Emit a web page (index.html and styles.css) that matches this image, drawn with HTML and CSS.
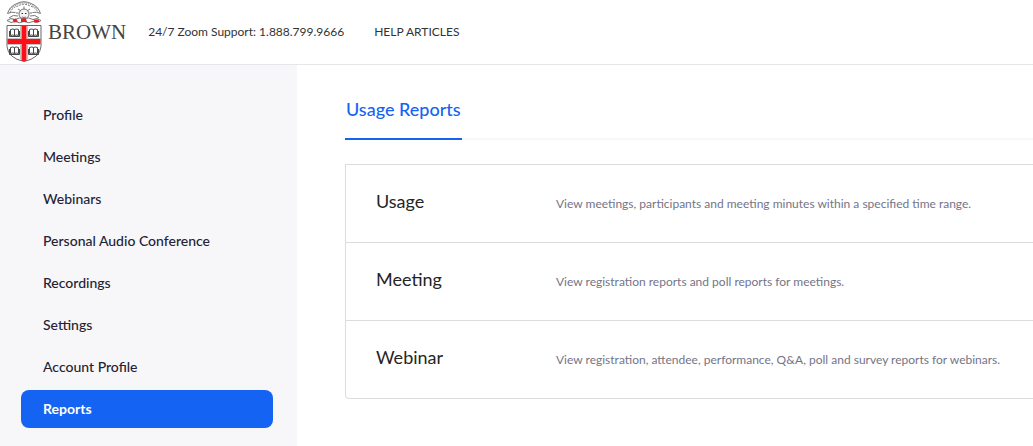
FILE: index.html
```html
<!DOCTYPE html>
<html lang="en">
<head>
<meta charset="utf-8">
<meta name="viewport" content="width=device-width, initial-scale=1">
<title>Usage Reports</title>
<link rel="stylesheet" href="styles.css">
</head>
<body>
<header class="topbar">
  <a class="brand" href="#" aria-label="Brown home">
    <svg class="crest" viewBox="0 0 36 62" aria-hidden="true">
      <g fill="none" stroke="#777" stroke-width="1">
        <path d="M1.500 12.500Q4 5 11 2.500Q18-1 25 2.500Q32 5 34.500 12.500"/>
        <path stroke-dasharray="2 1" d="M4 11.500Q6 6.500 12 5Q18 1.500 24 5Q30 6.500 32 11.500"/>
        <path stroke="#999" stroke-dasharray="1 1" stroke-width="2" d="M4 8Q10 2 18 1.500Q26 2 32 8"/>
        <path d="M1.500 12.500q4-2 8-1M34.500 12.500q-4-2-8-1M3 17Q7 13 12 15M33 17Q29 13 24 15"/>
        <circle cx="18" cy="13" r="5" fill="#f4f4f4"/>
        <path d="M12 8l3 2M24 8l-3 2M18 5.500v2.500M10 12h2.500M23.500 12h2.500M16 16q2 1 4 0"/>
      </g>
      <path d="M15.500 12.500h1.500M19 12.500h1.500" stroke="#333"/>
      <path d="M1 19.500Q5 16 9 18.500Q13 16 18 17.500Q23 16 27 18.500Q31 16 35 19.500Q31 23 27 20.500Q23 23 18 20.500Q13 23 9 20.500Q5 23 1 19.500Z" fill="#fff" stroke="#777"/>
      <path d="M6.500 18.500l3.500-1 2 3-4 1zM15 17.500h5l1 3.500h-6zM27.500 18.500l5 0 1 2.500-5 .5z" fill="#ee1c24"/>
      <path d="M1 24.500h34v21Q34 57 18 60.500Q2 57 1 45.500Z" fill="#fff" stroke="#666" stroke-width="1"/>
      <path d="M15.500 25h5V59.500q-2.500 1-5 0zM1.500 38h33v5h-33z" fill="#fb1017"/>
      <path d="M14.500 25V37.500H1.500M21.500 25V37.500h13M1.500 43.500H14.500v15M34.500 43.500H21.500v15" fill="none" stroke="#aaa" stroke-width=".7"/>
      <g fill="none" stroke="#444">
        <path id="book" d="M4.500 28.500q2.500-1 4 0q1.500-1 4 0v6q-2.500-1-4 0q-1.500-1-4 0zM8.500 28.500v6M3.500 30v5.500h10v-5.500"/>
        <use href="#book" x="19"/>
        <use href="#book" y="18"/>
        <use href="#book" x="19" y="18"/>
      </g>
    </svg>
    <span class="wordmark">BROWN</span>
  </a>
  <span class="support">24/7 Zoom Support: 1.888.799.9666</span>
  <a class="help" href="#">HELP ARTICLES</a>
</header>
<div class="layout">
  <nav class="sidebar" aria-label="Account">
    <a class="item" href="#">Profile</a>
    <a class="item" href="#">Meetings</a>
    <a class="item" href="#">Webinars</a>
    <a class="item" href="#">Personal Audio Conference</a>
    <a class="item" href="#">Recordings</a>
    <a class="item" href="#">Settings</a>
    <a class="item" href="#">Account Profile</a>
    <a class="item active" href="#" aria-current="page">Reports</a>
  </nav>
  <main class="content">
    <div class="tabs"><a class="tab" href="#">Usage Reports</a></div>
    <div class="reports">
      <div class="report">
        <a class="name" href="#">Usage</a>
        <p class="description">View meetings, participants and meeting minutes within a specified time range.</p>
      </div>
      <div class="report">
        <a class="name" href="#">Meeting</a>
        <p class="description">View registration reports and poll reports for meetings.</p>
      </div>
      <div class="report">
        <a class="name" href="#">Webinar</a>
        <p class="description">View registration, attendee, performance, Q&amp;A, poll and survey reports for webinars.</p>
      </div>
    </div>
  </main>
</div>
</body>
</html>
```
FILE: styles.css
```css
* { box-sizing: border-box; }
body {
  margin: 0;
  min-height: 100vh;
  display: flex;
  flex-direction: column;
  background: #fff;
  font-family: Lato, "Liberation Sans", sans-serif;
  color: #232333;
}
a { color: inherit; text-decoration: none; }
.topbar {
  display: flex;
  align-items: center;
  padding: 0 6px;
  border-bottom: 1px solid #e6e6ea;
  font-size: 12px;
  line-height: 16px;
  color: #333;
}
.brand { display: flex; align-items: center; gap: 6px; padding: 1px 0; }
.crest { width: 36px; height: 62px; }
.wordmark {
  font-family: "Liberation Serif", serif;
  font-size: 21px;
  line-height: 24px;
  color: #444;
}
.support { margin-left: 22px; }
.help { margin-left: 30px; }
.layout { flex: 1; display: flex; }
.sidebar {
  flex: 0 0 297px;
  display: flex;
  flex-direction: column;
  gap: 4px;
  padding: 31px 24px 18px 21px;
  background: #f7f7fa;
}
.item {
  padding: 9px 22px;
  border-radius: 8px;
  font-size: 14px;
  line-height: 20px;
  font-weight: 500;
}
.active { background: #1563f2; color: #fff; font-weight: 700; }
.content { flex: 1; min-width: 0; padding: 32px 0 32px 48px; }
.tabs { display: flex; box-shadow: inset 0 -2px #f7f7f9; }
.tab {
  padding: 0 1px 17px;
  border-bottom: 2px solid #1563f2;
  font-size: 18px;
  line-height: 24px;
  font-weight: 500;
  color: #1563f2;
}
.reports {
  margin-top: 24px;
  border: 1px solid #dcdcdc;
  border-right: 0;
  border-radius: 0 0 0 4px;
}
.report {
  display: grid;
  grid-template-columns: 180px 1fr;
  align-items: baseline;
  padding: 24px 0 29px 30px;
}
.report + .report { border-top: 1px solid #dcdcdc; }
.name { font-size: 18px; line-height: 24px; color: #252525; }
.description { margin: 0; font-size: 12px; line-height: 16px; color: #747487; }
```
